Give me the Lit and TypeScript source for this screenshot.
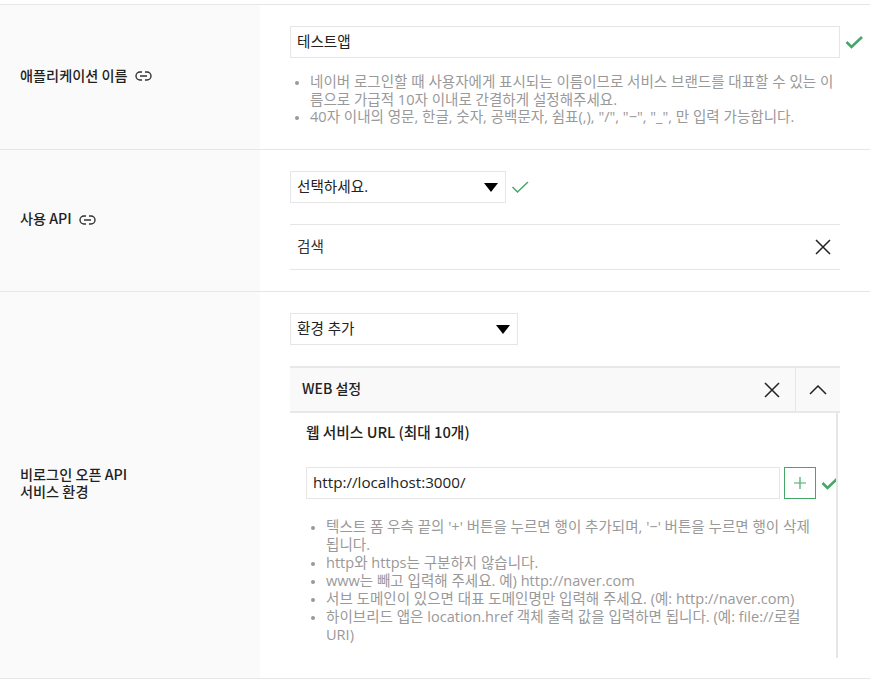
import { LitElement, html, css } from "lit";
import { customElement } from "lit/decorators.js";

const link = html`<svg class="link" width="17" height="10" viewBox="0 0 17 10" fill="none" stroke="#333" stroke-width="1.4"><path d="M7 1H5a4 4 0 0 0 0 8h2M10 1h2a4 4 0 0 1 0 8h-2M5 5h7"/></svg>`;
const check = (thin = false) => html`<svg class="check" width="18" height="14" viewBox="0 0 18 14" fill="none" stroke="#46a868" stroke-width="${thin ? 1.5 : 2.6}"><path d="M1.5 7 6.5 12 17 2"/></svg>`;
const x = html`<svg width="16" height="16" viewBox="0 0 16 16" fill="none" stroke="#222" stroke-width="1.5"><path d="M1 1 15 15M15 1 1 15"/></svg>`;
const arrow = html`<svg class="arrow" width="14" height="9" viewBox="0 0 14 9"><path d="M0 0H14L7 9Z" fill="#000"/></svg>`;

@customElement("app-root")
export class AppRoot extends LitElement {
  static styles = css`
    :host { display: block; width: 870px; padding-top: 4px; font-family: "Open Sans", "Noto Sans CJK KR", sans-serif; font-size: 14px; color: #333; background: #fff; }
    .row { display: grid; grid-template-columns: 260px 1fr; border-top: 1px solid #e6e6e6; }
    .row:last-child { border-bottom: 1px solid #e6e6e6; }
    .r1 { height: 144px; }
    .r2 { height: 141px; }
    .r3 { height: 386px; }
    .head { background: #fafafa; display: flex; align-items: center; padding: 0 0 4px 20px; font-family: "Noto Sans CJK KR", sans-serif; font-size: 14.2px; font-weight: 500; line-height: 17px; color: #222; }
    .head .link { margin-left: 7px; vertical-align: -0.5px; }
    .body { padding: 21px 0 0 30px; min-width: 0; }
    .line { display: flex; align-items: center; }
    .box { box-sizing: border-box; height: 32px; border: 1px solid #e6e6e6; display: flex; align-items: center; padding: 0 6px 3px; color: #222; background: #fff; line-height: 20px; font-size: 14.6px; flex: none; }
    .w550 { width: 550px; }
    .sel { justify-content: space-between; padding-right: 7px; padding-bottom: 0; }
    .sel span { padding-bottom: 3px; }
    .w216 { width: 216px; }
    .w228 { width: 228px; }
    .check { margin-left: 5px; flex: none; }
    ul { margin: 0; padding: 0 0 0 20px; color: #999; line-height: 17.6px; font-size: 14.55px; }
    li::marker { font-size: 12px; }
    .r1 ul { margin-top: 15px; width: 525px; }
    .item { box-sizing: border-box; width: 550px; height: 46px; margin-top: 21px; border-top: 1px solid #e6e6e6; border-bottom: 1px solid #e6e6e6; display: flex; align-items: center; justify-content: space-between; padding: 0 9px 0 7px; font-size: 14.6px; }
    .item span { padding-bottom: 3px; }
    .panel { width: 550px; margin-top: 21px; }
    .phead { box-sizing: border-box; height: 47px; background: #f9f9f9; border-top: 2px solid #e8e8e8; border-bottom: 2px solid #e8e8e8; display: flex; align-items: center; padding-left: 12px; font-family: "Noto Sans CJK KR", sans-serif; font-weight: 500; color: #222; }
    .ptitle { flex: 1; padding-bottom: 4px; }
    .px { width: 46px; display: flex; justify-content: center; }
    .pup { box-sizing: border-box; width: 45px; height: 100%; border-left: 1px solid #e6e6e6; display: flex; align-items: center; justify-content: center; }
    .pbody { box-sizing: border-box; width: 548px; height: 245px; border-right: 2px solid #e6e6e6; padding: 8px 0 0 16px; overflow: hidden; }
    .sub { font-family: "Noto Sans CJK KR", sans-serif; font-weight: 500; color: #222; line-height: 22px; font-size: 14.7px; }
    .urlrow { margin-top: 24px; }
    .w474 { width: 474px; font-size: 15.2px; }
    .plus { box-sizing: border-box; width: 32px; height: 32px; border: 1px solid #46a868; margin-left: 4px; display: flex; align-items: center; justify-content: center; flex: none; }
    .r3 ul { margin-top: 18px; width: 492px; line-height: 18px; }
  `;

  render() {
    return html`
      <section class="row r1">
        <div class="head"><div>애플리케이션 이름${link}</div></div>
        <div class="body">
          <div class="line"><div class="box w550">테스트앱</div>${check()}</div>
          <ul>
            <li>네이버 로그인할 때 사용자에게 표시되는 이름이므로 서비스 브랜드를 대표할 수 있는 이름으로 가급적 10자 이내로 간결하게 설정해주세요.</li>
            <li>40자 이내의 영문, 한글, 숫자, 공백문자, 쉼표(,), "/", "−", "_", 만 입력 가능합니다.</li>
          </ul>
        </div>
      </section>
      <section class="row r2">
        <div class="head"><div>사용 API${link}</div></div>
        <div class="body">
          <div class="line"><div class="box sel w216"><span>선택하세요.</span>${arrow}</div>${check(true)}</div>
          <div class="item"><span>검색</span>${x}</div>
        </div>
      </section>
      <section class="row r3">
        <div class="head"><div>비로그인 오픈 API<br />서비스 환경</div></div>
        <div class="body">
          <div class="box sel w228"><span>환경 추가</span>${arrow}</div>
          <div class="panel">
            <div class="phead">
              <span class="ptitle">WEB 설정</span>
              <span class="px">${x}</span>
              <span class="pup"><svg width="18" height="10" viewBox="0 0 18 10" fill="none" stroke="#222" stroke-width="1.5"><path d="M1 9 9 1l8 8"/></svg></span>
            </div>
            <div class="pbody">
              <div class="sub">웹 서비스 URL (최대 10개)</div>
              <div class="line urlrow">
                <div class="box w474">http://localhost:3000/</div>
                <div class="plus"><svg width="12" height="12" viewBox="0 0 12 12" stroke="#46a868" stroke-width="1.2"><path d="M6 0v12M0 6h12"/></svg></div>
                ${check()}
              </div>
              <ul>
                <li>텍스트 폼 우측 끝의 '+' 버튼을 누르면 행이 추가되며, '−' 버튼을 누르면 행이 삭제됩니다.</li>
                <li>http와 https는 구분하지 않습니다.</li>
                <li>www는 빼고 입력해 주세요. 예) http://naver.com</li>
                <li>서브 도메인이 있으면 대표 도메인명만 입력해 주세요. (예: http://naver.com)</li>
                <li>하이브리드 앱은 location.href 객체 출력 값을 입력하면 됩니다. (예: file://로컬 URI)</li>
              </ul>
            </div>
          </div>
        </div>
      </section>
    `;
  }
}
